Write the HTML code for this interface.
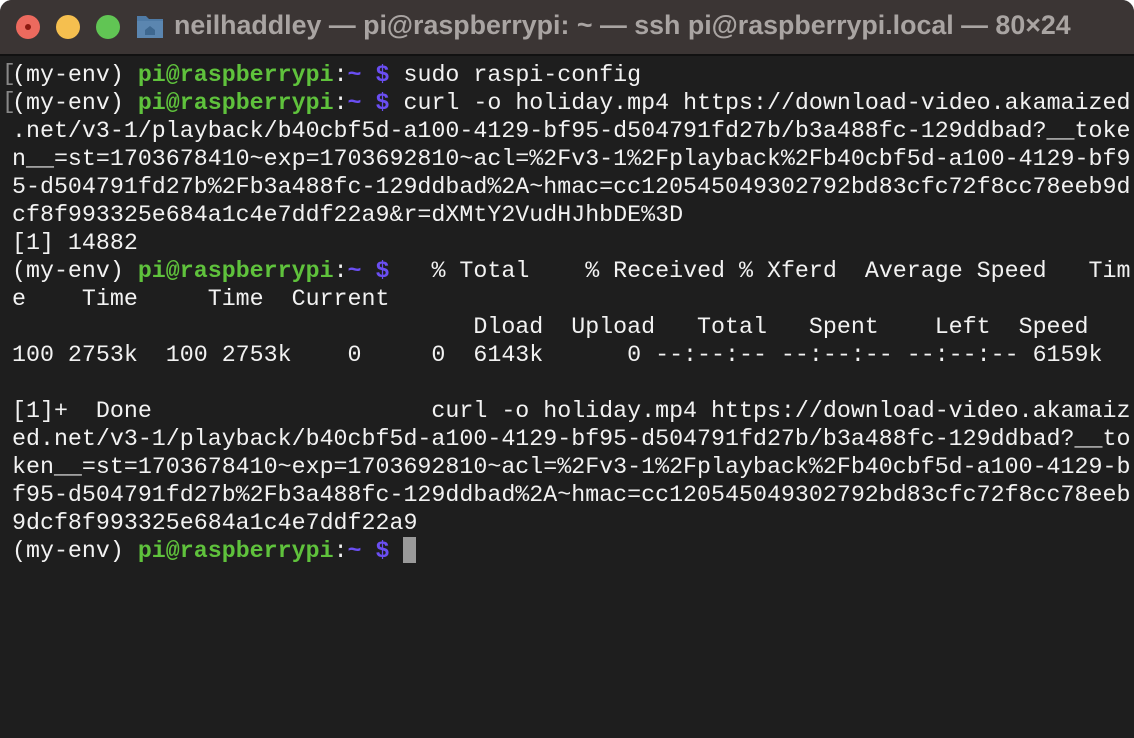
<!DOCTYPE html>
<html><head><style>
html,body{margin:0;padding:0;background:#fff;}
.win{position:absolute;left:0;top:0;width:1134px;height:738px;background:#1e1e1e;border-radius:12px 12px 0 0;overflow:hidden;}
.tb{position:absolute;left:0;top:0;width:1134px;height:54px;background:#3b3534;border-bottom:2px solid #111;}
.dot{position:absolute;top:15px;width:24px;height:24px;border-radius:50%;}
.title{position:absolute;left:174px;top:10px;font:bold 26.8px "Liberation Sans",sans-serif;color:#a9a4a2;white-space:nowrap;}
pre{position:absolute;left:12px;top:61px;margin:0;font-family:"Liberation Mono",monospace;font-size:23.3px;line-height:28px;color:#f2f2f2;}
.g{color:#5fc23c;font-weight:bold}.p{color:#6a4ef2;font-weight:bold}
.cur{display:inline-block;width:13px;height:26px;background:#9a9a9a;vertical-align:-6px;}
.br{position:absolute;left:2px;font:23px "Liberation Mono",monospace;color:#888;}
</style></head><body>
<div class="win">
<div class="tb">
<div class="dot" style="left:16px;background:#ec6a5e"><div style="position:absolute;left:9px;top:9px;width:6px;height:6px;border-radius:50%;background:#8c1a10"></div></div>
<div class="dot" style="left:56px;background:#f5bf4f"></div>
<div class="dot" style="left:96px;background:#61c554"></div>
<svg style="position:absolute;left:136px;top:13px" width="28" height="26" viewBox="0 0 28 26"><path d="M1 3h9l3 3h14v19H1z" fill="#4f7ba6"/><rect x="1" y="8" width="26" height="17" fill="#5b86b0"/><path d="M9 17l5-4 5 4v5H9z" fill="#3e6890"/></svg>
<div class="title">neilhaddley — pi@raspberrypi: ~ — ssh pi@raspberrypi.local — 80×24</div>
</div>
<div class="br" style="top:61px">[</div><div class="br" style="top:89px">[</div>
<pre>(my-env) <span class="g">pi@raspberrypi</span>:<span class="p">~ $</span> sudo raspi-config
(my-env) <span class="g">pi@raspberrypi</span>:<span class="p">~ $</span> curl -o holiday.mp4 https://download-video.akamaized
.net/v3-1/playback/b40cbf5d-a100-4129-bf95-d504791fd27b/b3a488fc-129ddbad?__toke
n__=st=1703678410~exp=1703692810~acl=%2Fv3-1%2Fplayback%2Fb40cbf5d-a100-4129-bf9
5-d504791fd27b%2Fb3a488fc-129ddbad%2A~hmac=cc120545049302792bd83cfc72f8cc78eeb9d
cf8f993325e684a1c4e7ddf22a9&amp;r=dXMtY2VudHJhbDE%3D
[1] 14882
(my-env) <span class="g">pi@raspberrypi</span>:<span class="p">~ $</span>   % Total    % Received % Xferd  Average Speed   Tim
e    Time     Time  Current
                                 Dload  Upload   Total   Spent    Left  Speed
100 2753k  100 2753k    0     0  6143k      0 --:--:-- --:--:-- --:--:-- 6159k

[1]+  Done                    curl -o holiday.mp4 https://download-video.akamaiz
ed.net/v3-1/playback/b40cbf5d-a100-4129-bf95-d504791fd27b/b3a488fc-129ddbad?__to
ken__=st=1703678410~exp=1703692810~acl=%2Fv3-1%2Fplayback%2Fb40cbf5d-a100-4129-b
f95-d504791fd27b%2Fb3a488fc-129ddbad%2A~hmac=cc120545049302792bd83cfc72f8cc78eeb
9dcf8f993325e684a1c4e7ddf22a9
(my-env) <span class="g">pi@raspberrypi</span>:<span class="p">~ $</span> <span class="cur"></span></pre>
</div>
</body></html>
